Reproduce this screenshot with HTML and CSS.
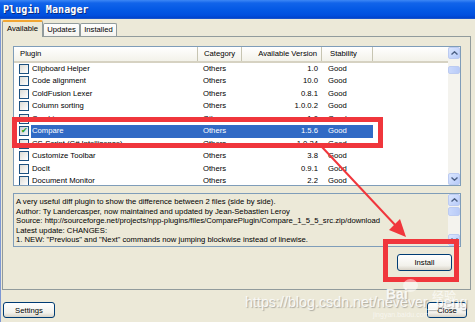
FILE: index.html
```html
<!DOCTYPE html>
<html lang="en">
<head>
    <meta charset="UTF-8">
    <title>Plugin Manager</title>
    <link rel="stylesheet" href="styles.css">
</head>
<body>
<div class="window">
    <div class="titlebar"><span class="title">Plugin Manager</span></div>

    <div class="client">
        <div class="tabs">
            <div class="tab active">Available</div>
            <div class="tab">Updates</div>
            <div class="tab">Installed</div>
        </div>

        <div class="panel">
            <!-- plugin list -->
            <div class="list">
                <div class="list-body">
                    <div class="head">
                        <div class="h-name">Plugin</div>
                        <div class="h-cat">Category</div>
                        <div class="h-ver">Available Version</div>
                        <div class="h-stab">Stability</div>
                        <div class="h-fill"></div>
                    </div>
                    <div class="row"><span class="check"></span><div class="cells"><span class="name">Clipboard Helper</span><span class="cat">Others</span><span class="ver">1.0</span><span class="stab">Good</span></div></div>
                    <div class="row"><span class="check"></span><div class="cells"><span class="name">Code alignment</span><span class="cat">Others</span><span class="ver">10.0</span><span class="stab">Good</span></div></div>
                    <div class="row"><span class="check"></span><div class="cells"><span class="name">ColdFusion Lexer</span><span class="cat">Others</span><span class="ver">0.8.1</span><span class="stab">Good</span></div></div>
                    <div class="row"><span class="check"></span><div class="cells"><span class="name">Column sorting</span><span class="cat">Others</span><span class="ver">1.0.0.2</span><span class="stab">Good</span></div></div>
                    <div class="row"><span class="check"></span><div class="cells"><span class="name">Combine</span><span class="cat">Others</span><span class="ver">1.0</span><span class="stab">Good</span></div></div>
                    <div class="row selected"><span class="check checked">&#10004;</span><div class="cells"><span class="name">Compare</span><span class="cat">Others</span><span class="ver">1.5.6</span><span class="stab">Good</span></div></div>
                    <div class="row"><span class="check"></span><div class="cells"><span class="name">CS-Script (C# Intellisense)</span><span class="cat">Others</span><span class="ver">1.0.24</span><span class="stab">Good</span></div></div>
                    <div class="row"><span class="check"></span><div class="cells"><span class="name">Customize Toolbar</span><span class="cat">Others</span><span class="ver">3.8</span><span class="stab">Good</span></div></div>
                    <div class="row"><span class="check"></span><div class="cells"><span class="name">DocIt</span><span class="cat">Others</span><span class="ver">0.9.1</span><span class="stab">Good</span></div></div>
                    <div class="row"><span class="check"></span><div class="cells"><span class="name">Document Monitor</span><span class="cat">Others</span><span class="ver">2.2</span><span class="stab">Good</span></div></div>
                </div>
                <div class="scroll">
                    <div class="sb-btn"><svg width="7" height="4" viewBox="0 0 7 4"><path d="M0.5 3.5 L3.5 0.8 L6.5 3.5" fill="none" stroke="#4d6185" stroke-width="1.4"/></svg></div>
                    <div class="sb-track"><div class="sb-thumb list-thumb"></div></div>
                    <div class="sb-btn"><svg width="7" height="4" viewBox="0 0 7 4"><path d="M0.5 0.5 L3.5 3.2 L6.5 0.5" fill="none" stroke="#4d6185" stroke-width="1.4"/></svg></div>
                </div>
            </div>

            <!-- description -->
            <div class="desc">
                <div class="desc-text">
                    <p>A very useful diff plugin to show the difference between 2 files (side by side).</p>
                    <p>Author: Ty Landercasper, now maintained and updated by Jean-Sebastien Leroy</p>
                    <p>Source: http://sourceforge.net/projects/npp-plugins/files/ComparePlugin/Compare_1_5_5_src.zip/download</p>
                    <p>Latest update: CHANGES:</p>
                    <p>1. NEW: "Previous" and "Next" commands now jumping blockwise instead of linewise.</p>
                </div>
                <div class="scroll">
                    <div class="sb-btn"><svg width="7" height="4" viewBox="0 0 7 4"><path d="M0.5 3.5 L3.5 0.8 L6.5 3.5" fill="none" stroke="#4d6185" stroke-width="1.4"/></svg></div>
                    <div class="sb-track"><div class="sb-thumb desc-thumb"></div></div>
                    <div class="sb-btn"><svg width="7" height="4" viewBox="0 0 7 4"><path d="M0.5 0.5 L3.5 3.2 L6.5 0.5" fill="none" stroke="#4d6185" stroke-width="1.4"/></svg></div>
                </div>
            </div>

            <div class="actions">
                <button class="btn install">Install</button>
            </div>
        </div>

        <div class="footer">
            <button class="btn settings">Settings</button>
            <button class="btn close">Close</button>
        </div>
    </div>

    <!-- annotations drawn over the screenshot -->
    <div class="mark mark-row"></div>
    <div class="mark mark-install"></div>
    <svg class="arrow" width="475" height="322" viewBox="0 0 475 322">
        <path d="M322 147 L397 227" stroke="#f0363c" stroke-width="2" fill="none"/>
        <polygon points="406,237 389,230 400,219" fill="#f0363c"/>
    </svg>

    <div class="watermark">
        <span class="wm-url">https://blog.csdn.net/nevever_peng</span>
        <span class="wm-bai">Bai</span>
        <span class="wm-paw"></span>
        <span class="wm-cn">经验</span>
        <span class="wm-site">jingyan.baidu.com</span>
    </div>
</div>
</body>
</html>
```

FILE: styles.css
```css
body {
    margin: 0;
    padding: 0;
    background-color: #ece9d8;
}
.window {
    position: relative;
    width: 475px;
    height: 322px;
    overflow: hidden;
    background-color: #ece9d8;
    font-family: "Liberation Sans", Arial, sans-serif;
    font-size: 7.7px;
    color: #000;
    box-shadow: inset 1px 0 0 #7d97d4;
}
.titlebar {
    height: 19px;
    background: linear-gradient(#3d87f5 0, #1164ea 3px, #0358e4 10px, #0050df 15px, #0043cc 18px, #2f63c9 19px);
    display: flex;
    align-items: center;
    padding-left: 3px;
}
.title {
    font-family: "DejaVu Sans Mono", monospace;
    font-weight: bold;
    font-size: 10px;
    color: #fff;
    text-shadow: 1px 1px 0 #0b2a80;
    letter-spacing: 0.1px;
}
.client {
    padding-top: 1px;
}

/* tabs */
.tabs {
    display: flex;
    align-items: flex-end;
    height: 16px;
    padding-left: 2px;
}
.tab {
    box-sizing: border-box;
    height: 13px;
    width: 37px;
    border: 1px solid #919b9c;
    border-bottom: none;
    border-radius: 2px 2px 0 0;
    background: linear-gradient(#fefefe, #f4f3ee);
    text-align: center;
    line-height: 12px;
}
.tab.active {
    position: relative;
    z-index: 1;
    width: 41px;
    height: 17px;
    margin-bottom: -1px;
    background: #ece9d8;
    border-top: 2px solid #f1a633;
    line-height: 14px;
}

/* tab panel */
.panel {
    box-sizing: border-box;
    margin-left: 2px;
    width: 469px;
    height: 254px;
    border: 1px solid #919b9c;
    padding: 9px 9px 0 10px;
    background: #ece9d8;
}
.list {
    box-sizing: border-box;
    width: 448px;
    height: 140px;
    border: 1px solid #7f9db9;
    background: #fff;
    display: flex;
}
.list-body {
    flex: 1;
    overflow: hidden;
}
.head {
    box-sizing: border-box;
    display: flex;
    height: 15.5px;
    background: linear-gradient(#ffffff, #f3f2ea);
    border-bottom: 2px solid #d6d2c2;
    line-height: 13px;
}
.head > div {
    box-sizing: border-box;
    height: 13.5px;
    border-right: 1px solid #c7c5b2;
}
.h-name { width: 184px; padding-left: 6px; }
.h-cat { width: 44px; padding-left: 6px; }
.h-ver { width: 80px; text-align: right; padding-right: 4px; }
.h-stab { width: 51px; padding-left: 8px; }
.h-fill { flex: 1; border-right: none !important; }

.row {
    display: flex;
    align-items: center;
    height: 12.5px;
    padding-left: 5px;
}
.check {
    box-sizing: border-box;
    width: 10px;
    height: 10px;
    border: 1px solid #1c5180;
    background: linear-gradient(135deg, #dcdcd6, #ffffff);
    margin-right: 2px;
    font-size: 8px;
    line-height: 8px;
    text-align: center;
    color: #21a121;
}
.check.checked {
    background: linear-gradient(135deg, #c9cfd9, #f4f4f4);
}
.cells {
    display: flex;
    height: 12.5px;
    line-height: 12.5px;
    width: 342px;
}
.row.selected .cells {
    background: #316ac5;
    color: #fff;
}
.name { width: 167px; padding-left: 1px; box-sizing: border-box; white-space: nowrap; }
.cat { width: 44px; padding-left: 5px; box-sizing: border-box; }
.ver { width: 80px; padding-right: 4px; text-align: right; box-sizing: border-box; }
.stab { width: 51px; padding-left: 6px; box-sizing: border-box; }

/* scrollbars */
.scroll {
    width: 12px;
    display: flex;
    flex-direction: column;
    background: #f4f3ee;
}
.sb-btn {
    box-sizing: border-box;
    height: 12px;
    border: 1px solid #bccbf1;
    border-radius: 2px;
    background: linear-gradient(135deg, #dbe6fe, #b7cbf9);
    display: flex;
    align-items: center;
    justify-content: center;
}
.sb-track {
    flex: 1;
    padding-top: 7px;
}
.sb-thumb {
    box-sizing: border-box;
    height: 8px;
    border: 1px solid #bccbf1;
    border-radius: 2px;
    background: linear-gradient(90deg, #c9d8fc, #b9cbf7);
}
.desc-thumb {
    height: 9px;
    margin-top: -6px;
}

/* description box */
.desc {
    box-sizing: border-box;
    width: 448px;
    height: 54px;
    margin-top: 7px;
    border: 1px solid #7f9db9;
    display: flex;
    background: #ece9d8;
}
.desc-text {
    flex: 1;
    overflow: hidden;
    padding: 3px 0 0 2px;
    white-space: nowrap;
}
.desc-text p {
    margin: 0;
    line-height: 9.5px;
}
.actions {
    display: flex;
    justify-content: flex-end;
    width: 448px;
    margin-top: 7px;
}

/* buttons */
.btn {
    box-sizing: border-box;
    font-family: "Liberation Sans", Arial, sans-serif;
    font-size: 7.7px;
    color: #000;
    padding: 0;
    border: 1px solid #003c74;
    border-radius: 3px;
    background: linear-gradient(#ffffff, #f2f1eb 70%, #d8d3c8);
    height: 16px;
}
.install {
    width: 55px;
    height: 17px;
    margin-right: 9px;
}
.footer {
    display: flex;
    justify-content: space-between;
    margin-top: 12px;
    padding: 0 8px 0 3px;
}
.settings { width: 52px; }
.close { width: 40px; }

/* red annotation boxes and arrow */
.mark {
    position: absolute;
    box-sizing: border-box;
    border: 5px solid #f0363c;
}
.mark-row {
    left: 12px;
    top: 117px;
    width: 371px;
    height: 31px;
}
.mark-install {
    left: 383px;
    top: 239px;
    width: 76px;
    height: 43px;
}
.arrow {
    position: absolute;
    left: 0;
    top: 0;
    pointer-events: none;
}

/* baidu / csdn watermark */
.watermark {
    position: absolute;
    left: 0;
    top: 0;
    width: 475px;
    height: 322px;
    pointer-events: none;
    color: rgba(255, 255, 255, 0.85);
}
.wm-url {
    position: absolute;
    left: 245px;
    top: 294px;
    font-size: 14.3px;
    white-space: nowrap;
    text-shadow: 1px 1px 1px rgba(90, 90, 90, 0.45);
}
.wm-bai {
    position: absolute;
    left: 386px;
    top: 286px;
    font-size: 14px;
    font-weight: bold;
    text-shadow: 1px 1px 1px rgba(90, 90, 90, 0.35);
}
.wm-paw {
    position: absolute;
    left: 403px;
    top: 279px;
    width: 15px;
    height: 13px;
    border-radius: 50%;
    background: rgba(255, 255, 255, 0.5);
}
.wm-cn {
    position: absolute;
    left: 432px;
    top: 287px;
    font-family: "Noto Sans CJK SC", sans-serif;
    font-size: 12px;
    color: rgba(255, 255, 255, 0.7);
}
.wm-site {
    position: absolute;
    left: 373px;
    top: 311px;
    font-size: 7px;
    color: rgba(255, 255, 255, 0.6);
}
```
